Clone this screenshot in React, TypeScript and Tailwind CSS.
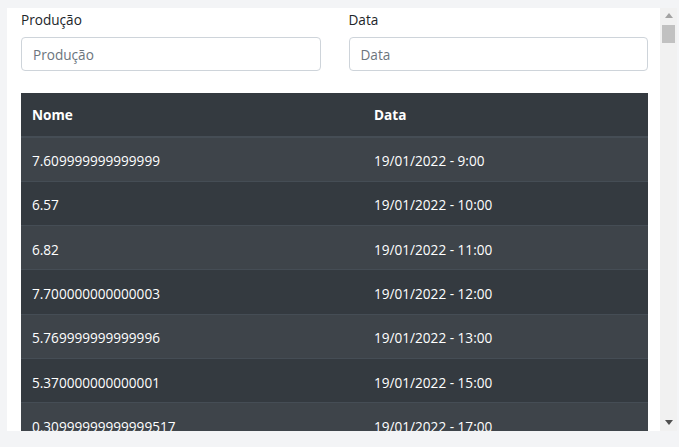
import React from "react";

const rows: [string, string][] = [
  ["7.609999999999999", "19/01/2022 - 9:00"],
  ["6.57", "19/01/2022 - 10:00"],
  ["6.82", "19/01/2022 - 11:00"],
  ["7.700000000000003", "19/01/2022 - 12:00"],
  ["5.769999999999996", "19/01/2022 - 13:00"],
  ["5.370000000000001", "19/01/2022 - 15:00"],
  ["0.30999999999999517", "19/01/2022 - 17:00"],
  ["4.12", "19/01/2022 - 18:00"],
  ["3.05", "19/01/2022 - 19:00"],
];

export default function App() {
  return (
    <div
      className="w-[679px] h-[447px] bg-[#f3f4f6] pt-[8px] pl-[7px] pr-[2px] pb-[16px] overflow-hidden"
      style={{ fontFamily: '"Open Sans", "Noto Sans", sans-serif' }}
    >
      <div className="flex h-[423px]">
        <div className="flex-1 bg-white pl-[14px] pr-[12px] overflow-hidden">
          <div className="grid grid-cols-2 gap-x-[28px]">
            {["Produção", "Data"].map((l) => (
              <div key={l} className="flex flex-col">
                <label className="text-[13.6px] leading-[21.6px] pt-[1px] text-[#212529] mb-[6px]">{l}</label>
                <div className="h-[34px] border border-[#ced4da] rounded-[4px] px-[11px] pt-[3px] flex items-center text-[13.6px] text-[#6c757d]">
                  {l}
                </div>
              </div>
            ))}
          </div>
          <div className="mt-[22px] text-white text-[13.6px]">
            <div className="grid grid-cols-[342px_1fr] h-[45px] pt-[3px] items-center bg-[#343a40] font-bold border-b-2 border-[#454d55]">
              <div className="px-[11px]">Nome</div>
              <div className="px-[11px]">Data</div>
            </div>
            {rows.map(([a, b], i) => (
              <div
                key={i}
                className={
                  "grid grid-cols-[342px_1fr] h-[44.3px] pt-[4px] items-center border-b border-[#454d55] " +
                  (i % 2 === 0 ? "bg-[#3e444a]" : "bg-[#343a40]")
                }
              >
                <div className="px-[11px]">{a}</div>
                <div className="px-[11px]">{b}</div>
              </div>
            ))}
          </div>
        </div>
        <div className="w-[17px] bg-[#f1f1f1] flex flex-col items-center">
          <div className="h-[15px] flex items-center justify-center">
            <svg width="8" height="5" viewBox="0 0 8 5">
              <path d="M0 5 L4 0 L8 5 Z" fill="#a3a3a3" />
            </svg>
          </div>
          <div className="w-[13px] h-[18px] mt-[2px] bg-[#c1c1c1]" />
          <div className="flex-1" />
          <div className="h-[17px] flex items-center justify-center">
            <svg width="8" height="5" viewBox="0 0 8 5">
              <path d="M0 0 L8 0 L4 5 Z" fill="#505050" />
            </svg>
          </div>
        </div>
      </div>
    </div>
  );
}
